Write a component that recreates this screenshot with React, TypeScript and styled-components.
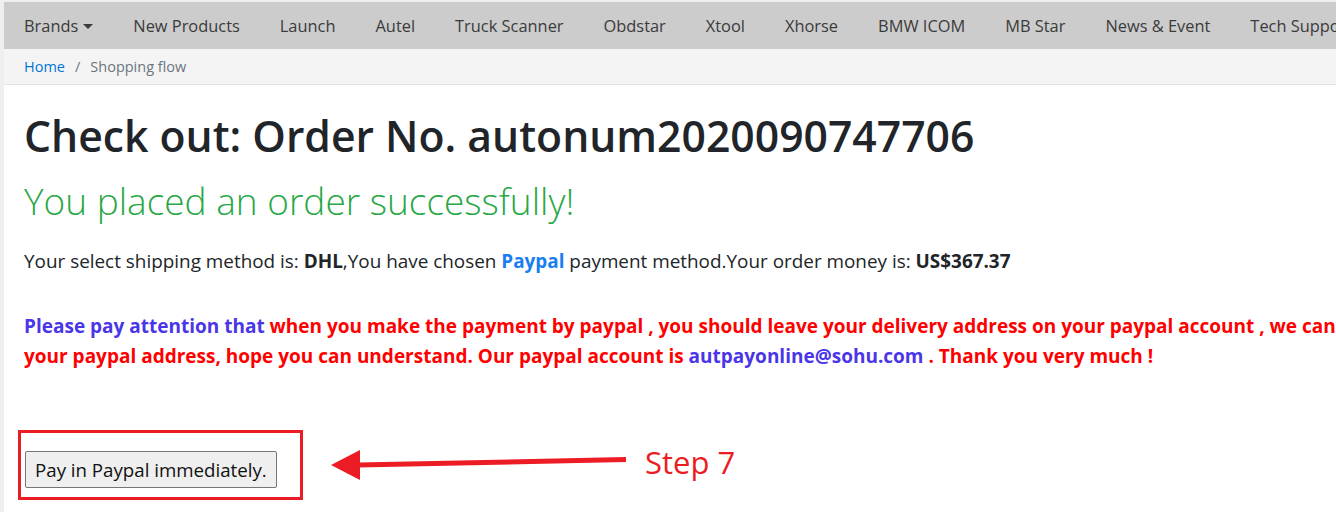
import React from "react";
import styled, { createGlobalStyle } from "styled-components";

const GlobalStyle = createGlobalStyle`
  html, body {
    margin: 0;
    padding: 0;
    background: #efefef;
    overflow: hidden;
  }
  body {
    font-family: "Open Sans", "Noto Sans", sans-serif;
    color: #212529;
  }
`;

const Page = styled.div`
  width: 1336px;
  height: 512px;
  padding: 2px 0 0 4px;
  box-sizing: border-box;
  overflow: hidden;
  background: #efefef;
`;

const Frame = styled.div`
  width: 1600px;
  display: flex;
  flex-direction: column;
`;

const Nav = styled.nav`
  display: flex;
  align-items: center;
  height: 47px;
  background: #cccccc;
  white-space: nowrap;
`;

const NavItem = styled.a`
  padding: 0 20px;
  font-size: 16.4px;
  color: #3b3b3b;
  text-decoration: none;
  display: flex;
  align-items: center;
  gap: 5px;
`;

const Caret = styled.span`
  width: 0;
  height: 0;
  border-left: 5px solid transparent;
  border-right: 5px solid transparent;
  border-top: 5px solid #3b3b3b;
  margin-top: 1px;
`;

const Crumbs = styled.div`
  display: flex;
  align-items: center;
  height: 35px;
  padding-left: 20px;
  background: #f4f4f4;
  border-bottom: 1px solid #e2e2e2;
  font-size: 14.5px;
  color: #6c757d;
`;

const CrumbLink = styled.a`
  color: #0275d8;
  text-decoration: none;
`;

const Sep = styled.span`
  padding: 0 10px;
  color: #6c757d;
`;

const Main = styled.main`
  background: #ffffff;
  padding: 22px 20px 20px;
  height: 460px;
`;

const Title = styled.h1`
  margin: 0;
  font-size: 42.7px;
  font-weight: 600;
  line-height: 58px;
  color: #212529;
`;

const Success = styled.h2`
  margin: 8px 0 0;
  font-size: 37px;
  font-weight: 300;
  line-height: 56px;
  color: #28a745;
`;

const Info = styled.p`
  margin: 18px 0 0;
  font-size: 18.9px;
  line-height: 28px;
`;

const Strong = styled.b<{ $blue?: boolean }>`
  font-weight: 700;
  color: ${(p) => (p.$blue ? "#1a7ef0" : "#212529")};
`;

const Notice = styled.p`
  margin: 36px 0 0;
  font-size: 19px;
  line-height: 30px;
  font-weight: 700;
  color: #ff0000;
  white-space: nowrap;
`;

const Accent = styled.span`
  color: #4a36e8;
`;

const ActionRow = styled.div`
  display: flex;
  align-items: center;
  margin: 59px 0 0 -6px;
`;

const Highlight = styled.div`
  width: 285px;
  height: 70px;
  box-sizing: border-box;
  border: 3px solid #ec1c24;
  padding: 18px 0 0 4px;
`;

const PayButton = styled.button`
  height: 37px;
  padding: 0 9px;
  font-family: "Open Sans", "Noto Sans", sans-serif;
  font-size: 18.7px;
  color: #111;
  background: #efefef;
  border: 1px solid #767676;
  border-radius: 2px;
`;

const Arrow = styled.svg`
  margin-left: 26px;
  flex: none;
`;

const StepLabel = styled.span`
  margin-left: 16px;
  font-size: 31px;
  color: #ec1c24;
  margin-top: -6px;
`;

export default function App() {
  const navItems = [
    "New Products",
    "Launch",
    "Autel",
    "Truck Scanner",
    "Obdstar",
    "Xtool",
    "Xhorse",
    "BMW ICOM",
    "MB Star",
    "News & Event",
    "Tech Support",
  ];
  return (
    <>
      <GlobalStyle />
      <Page>
        <Frame>
          <Nav>
            <NavItem>
              Brands <Caret />
            </NavItem>
            {navItems.map((n) => (
              <NavItem key={n}>{n}</NavItem>
            ))}
          </Nav>
          <Crumbs>
            <CrumbLink>Home</CrumbLink>
            <Sep>/</Sep>
            <span>Shopping flow</span>
          </Crumbs>
          <Main>
            <Title>Check out: Order No. autonum2020090747706</Title>
            <Success>You placed an order successfully!</Success>
            <Info>
              Your select shipping method is: <Strong>DHL</Strong>,You have chosen{" "}
              <Strong $blue>Paypal</Strong> payment method.Your order money is:{" "}
              <Strong>US$367.37</Strong>
            </Info>
            <Notice>
              <Accent>Please pay attention that</Accent> when you make the payment by paypal , you
              should leave your delivery address on your paypal account , we can only ship to
              <br />
              your paypal address, hope you can understand. Our paypal account is{" "}
              <Accent>autpayonline@sohu.com</Accent> . Thank you very much !
            </Notice>
            <ActionRow>
              <Highlight>
                <PayButton>Pay in Paypal immediately.</PayButton>
              </Highlight>
              <Arrow width="300" height="36" viewBox="0 0 300 36">
                <polygon points="2,18 31,3 31,33" fill="#ec1c24" />
                <polygon points="29,15.5 297,10 297,15 29,20.5" fill="#ec1c24" />
              </Arrow>
              <StepLabel>Step 7</StepLabel>
            </ActionRow>
          </Main>
        </Frame>
      </Page>
    </>
  );
}
